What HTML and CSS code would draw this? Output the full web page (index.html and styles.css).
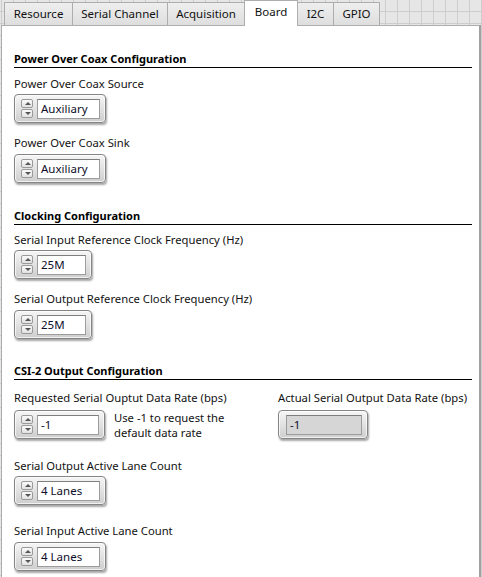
FILE: index.html
```html
<!DOCTYPE html>
<html>
<head>
<meta charset="utf-8">
<link rel="stylesheet" href="styles.css">
</head>
<body>
<div class="tabs">
  <div class="tab t1">Resource</div>
  <div class="tab t2">Serial Channel</div>
  <div class="tab t3">Acquisition</div>
  <div class="tab t4 active">Board</div>
  <div class="tab t5">I2C</div>
  <div class="tab t6">GPIO</div>
</div>
<div class="panel">
  <div class="sec s1">Power Over Coax Configuration</div>
  <div class="lbl first">Power Over Coax Source</div>
  <div class="ctl w92">
    <div class="spin"><span class="btn up"></span><span class="btn dn"></span></div>
    <div class="field">Auxiliary</div>
  </div>
  <div class="lbl b3">Power Over Coax Sink</div>
  <div class="ctl w92">
    <div class="spin"><span class="btn up"></span><span class="btn dn"></span></div>
    <div class="field">Auxiliary</div>
  </div>

  <div class="sec s2">Clocking Configuration</div>
  <div class="lbl first7">Serial Input Reference Clock Frequency (Hz)</div>
  <div class="ctl w78">
    <div class="spin"><span class="btn up"></span><span class="btn dn"></span></div>
    <div class="field">25M</div>
  </div>
  <div class="lbl b3">Serial Output Reference Clock Frequency (Hz)</div>
  <div class="ctl w78">
    <div class="spin"><span class="btn up"></span><span class="btn dn"></span></div>
    <div class="field">25M</div>
  </div>

  <div class="sec s3">CSI-2 Output Configuration</div>
  <div class="cols">
    <div class="col left">
      <div class="lbl first10 b4">Requested Serial Ouptut Data Rate (bps)</div>
      <div class="row">
        <div class="ctl w91">
          <div class="spin"><span class="btn up"></span><span class="btn dn"></span></div>
          <div class="field">-1</div>
        </div>
        <div class="note">Use -1 to request the<br>default data rate</div>
      </div>
    </div>
    <div class="col right">
      <div class="lbl first10 b4">Actual Serial Output Data Rate (bps)</div>
      <div class="ctl ind w90">
        <div class="field">-1</div>
      </div>
    </div>
  </div>
  <div class="lbl far">Serial Output Active Lane Count</div>
  <div class="ctl w92">
    <div class="spin"><span class="btn up"></span><span class="btn dn"></span></div>
    <div class="field">4 Lanes</div>
  </div>
  <div class="lbl far b3">Serial Input Active Lane Count</div>
  <div class="ctl w92">
    <div class="spin"><span class="btn up"></span><span class="btn dn"></span></div>
    <div class="field">4 Lanes</div>
  </div>
</div>
</body>
</html>
```
FILE: styles.css
```css
html, body {
  margin: 0;
  padding: 0;
}
body {
  width: 482px;
  height: 577px;
  overflow: hidden;
  font-family: "Noto Sans", "Open Sans", sans-serif;
  font-size: 11.25px;
  color: #121212;
  background-color: #e6e6e6;
  background-image:
    linear-gradient(to right, #cdcdcd 1px, transparent 1px),
    linear-gradient(to bottom, #cdcdcd 1px, transparent 1px);
  background-size: 12px 12px;
  background-position: 1px 11px;
}
.tabs {
  display: flex;
  padding-left: 4px;
  height: 25px;
  align-items: flex-end;
}
.tab {
  height: 23px;
  box-sizing: border-box;
  border: 1px solid #adadad;
  border-bottom: none;
  border-right: none;
  background: linear-gradient(#eeeeee, #dedede);
  text-align: center;
  line-height: 22px;
  font-size: 11.5px;
  color: #111;
  white-space: nowrap;
}
.t1 { width: 68px; }
.t2 { width: 95px; }
.t3 { width: 77px; }
.t4 { width: 54px; }
.t5 { width: 36px; }
.t6 { width: 47px; border-right: 1px solid #adadad; }
.tab.active {
  height: 26px;
  margin-bottom: -1px;
  background: #fff;
  line-height: 21px;
  position: relative;
  border-right: 1px solid #adadad;
  margin-right: -1px;
  z-index: 1;
}
.panel {
  margin-left: 1px;
  width: 480px;
  height: 560px;
  box-sizing: border-box;
  background: #fff;
  border-top: 1px solid #adadad;
  border-left: 1px solid #adadad;
  border-right: 2px solid #a0a0a0;
  padding: 0 7px 0 12px;
}
.sec {
  font-weight: 700;
  font-size: 11px;
  line-height: 16px;
  border-bottom: 1px solid #000;
  color: #000;
}
.s1 { margin-top: 25px; }
.s2 { margin-top: 25px; }
.s3 { margin-top: 24px; }
.lbl {
  line-height: 16px;
  margin-top: 12px;
  margin-bottom: 2px;
  white-space: nowrap;
}
.lbl.first { margin-top: 8px; }
.lbl.first7 { margin-top: 7px; }
.lbl.first10 { margin-top: 10px; }
.lbl.far { margin-top: 18px; }
.lbl.b3 { margin-bottom: 3px; }
.lbl.b4 { margin-bottom: 4px; }
.ctl {
  display: flex;
  align-items: center;
  height: 29px;
  box-sizing: border-box;
  border: 1px solid #858585;
  border-radius: 4px;
  background: linear-gradient(#f6f6f6, #cecece);
  box-shadow: inset 0 0 0 1px rgba(255,255,255,0.7), 1px 2px 2px rgba(0,0,0,0.35);
  padding: 0 5px 0 6px;
}
.w92 { width: 92px; }
.w78 { width: 78px; }
.w91 { width: 91px; }
.w90 { width: 90px; }
.spin {
  display: flex;
  flex-direction: column;
  width: 12px;
  margin-right: 4px;
  gap: 1px;
}
.btn {
  display: block;
  height: 7px;
  border: 1px solid #9a9a9a;
  border-radius: 2px;
  background: linear-gradient(#fafafa, #e2e2e2);
  position: relative;
}
.btn::after {
  content: "";
  position: absolute;
  left: 3px;
  width: 0;
  height: 0;
  border-left: 3px solid transparent;
  border-right: 3px solid transparent;
}
.up::after { top: 2px; border-bottom: 3px solid #555; }
.dn::after { top: 2px; border-top: 3px solid #555; }
.field {
  flex: 1;
  height: 20px;
  box-sizing: border-box;
  background: #fff;
  border: 1px solid #9c9c9c;
  border-top-color: #7f7f7f;
  line-height: 18px;
  padding-left: 3px;
  font-size: 11.5px;
  color: #0d0d2a;
}
.ind .field {
  background: #d6d6d6;
  margin-left: 1px;
}
.cols {
  display: flex;
}
.col.left { width: 264px; }
.row {
  display: flex;
  align-items: flex-start;
}
.note {
  margin-left: 9px;
  line-height: 15px;
  margin-top: 0;
}
```
